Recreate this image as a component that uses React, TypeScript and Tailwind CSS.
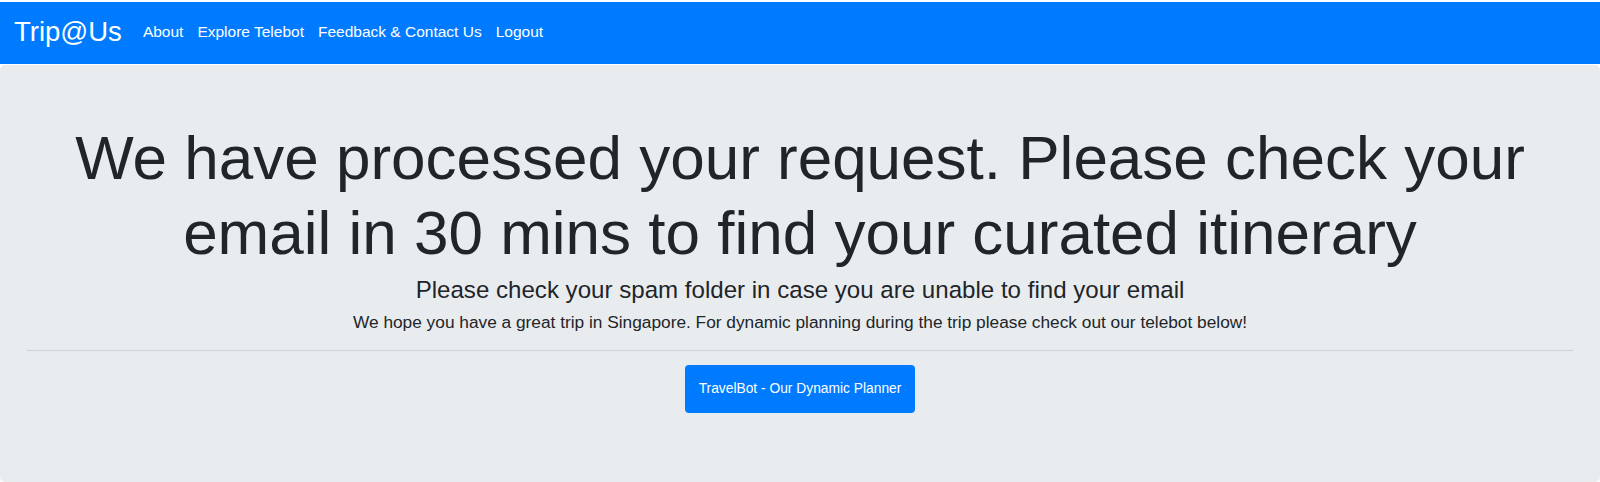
export default function App() {
  const links = ["About", "Explore Telebot", "Feedback & Contact Us", "Logout"];

  return (
    <div className="min-h-[482px] bg-white pt-[2px] font-['Liberation_Sans',Arial,sans-serif] text-[#212529]">
      {/* Navbar */}
      <nav className="flex h-[62px] items-center bg-[#007bff] pb-[2px] pl-[14px]">
        <a href="#" className="text-[27.5px] leading-none text-white">
          Trip@Us
        </a>
        <ul className="ml-[21px] flex items-center gap-[14px]">
          {links.map((link) => (
            <li key={link}>
              <a href="#" className="text-[15.5px] text-white">
                {link}
              </a>
            </li>
          ))}
        </ul>
      </nav>

      {/* Jumbotron */}
      <main className="mt-[1px] flex h-[417px] flex-col items-center rounded-[5px] bg-[#e9ecef] px-[27px] pt-[55px] text-center">
        <h1 className="text-[62px] leading-[75px] font-normal">
          We have processed your request. Please check your
          <br />
          email in 30 mins to find your curated itinerary
        </h1>

        <p className="mt-[5px] text-[24.1px] leading-[29px]">
          Please check your spam folder in case you are unable to find your email
        </p>

        <p className="mt-[6px] text-[17.3px] leading-6">
          We hope you have a great trip in Singapore. For dynamic planning during the trip please check out our telebot below!
        </p>

        <hr className="mt-[16px] w-full border-t border-black/10" />

        <a
          href="#"
          className="mt-[14px] inline-flex h-[48px] w-[230px] items-center justify-center rounded-[4px] bg-[#007bff] text-[13.8px] text-white"
        >
          TravelBot - Our Dynamic Planner
        </a>
      </main>
    </div>
  );
}
